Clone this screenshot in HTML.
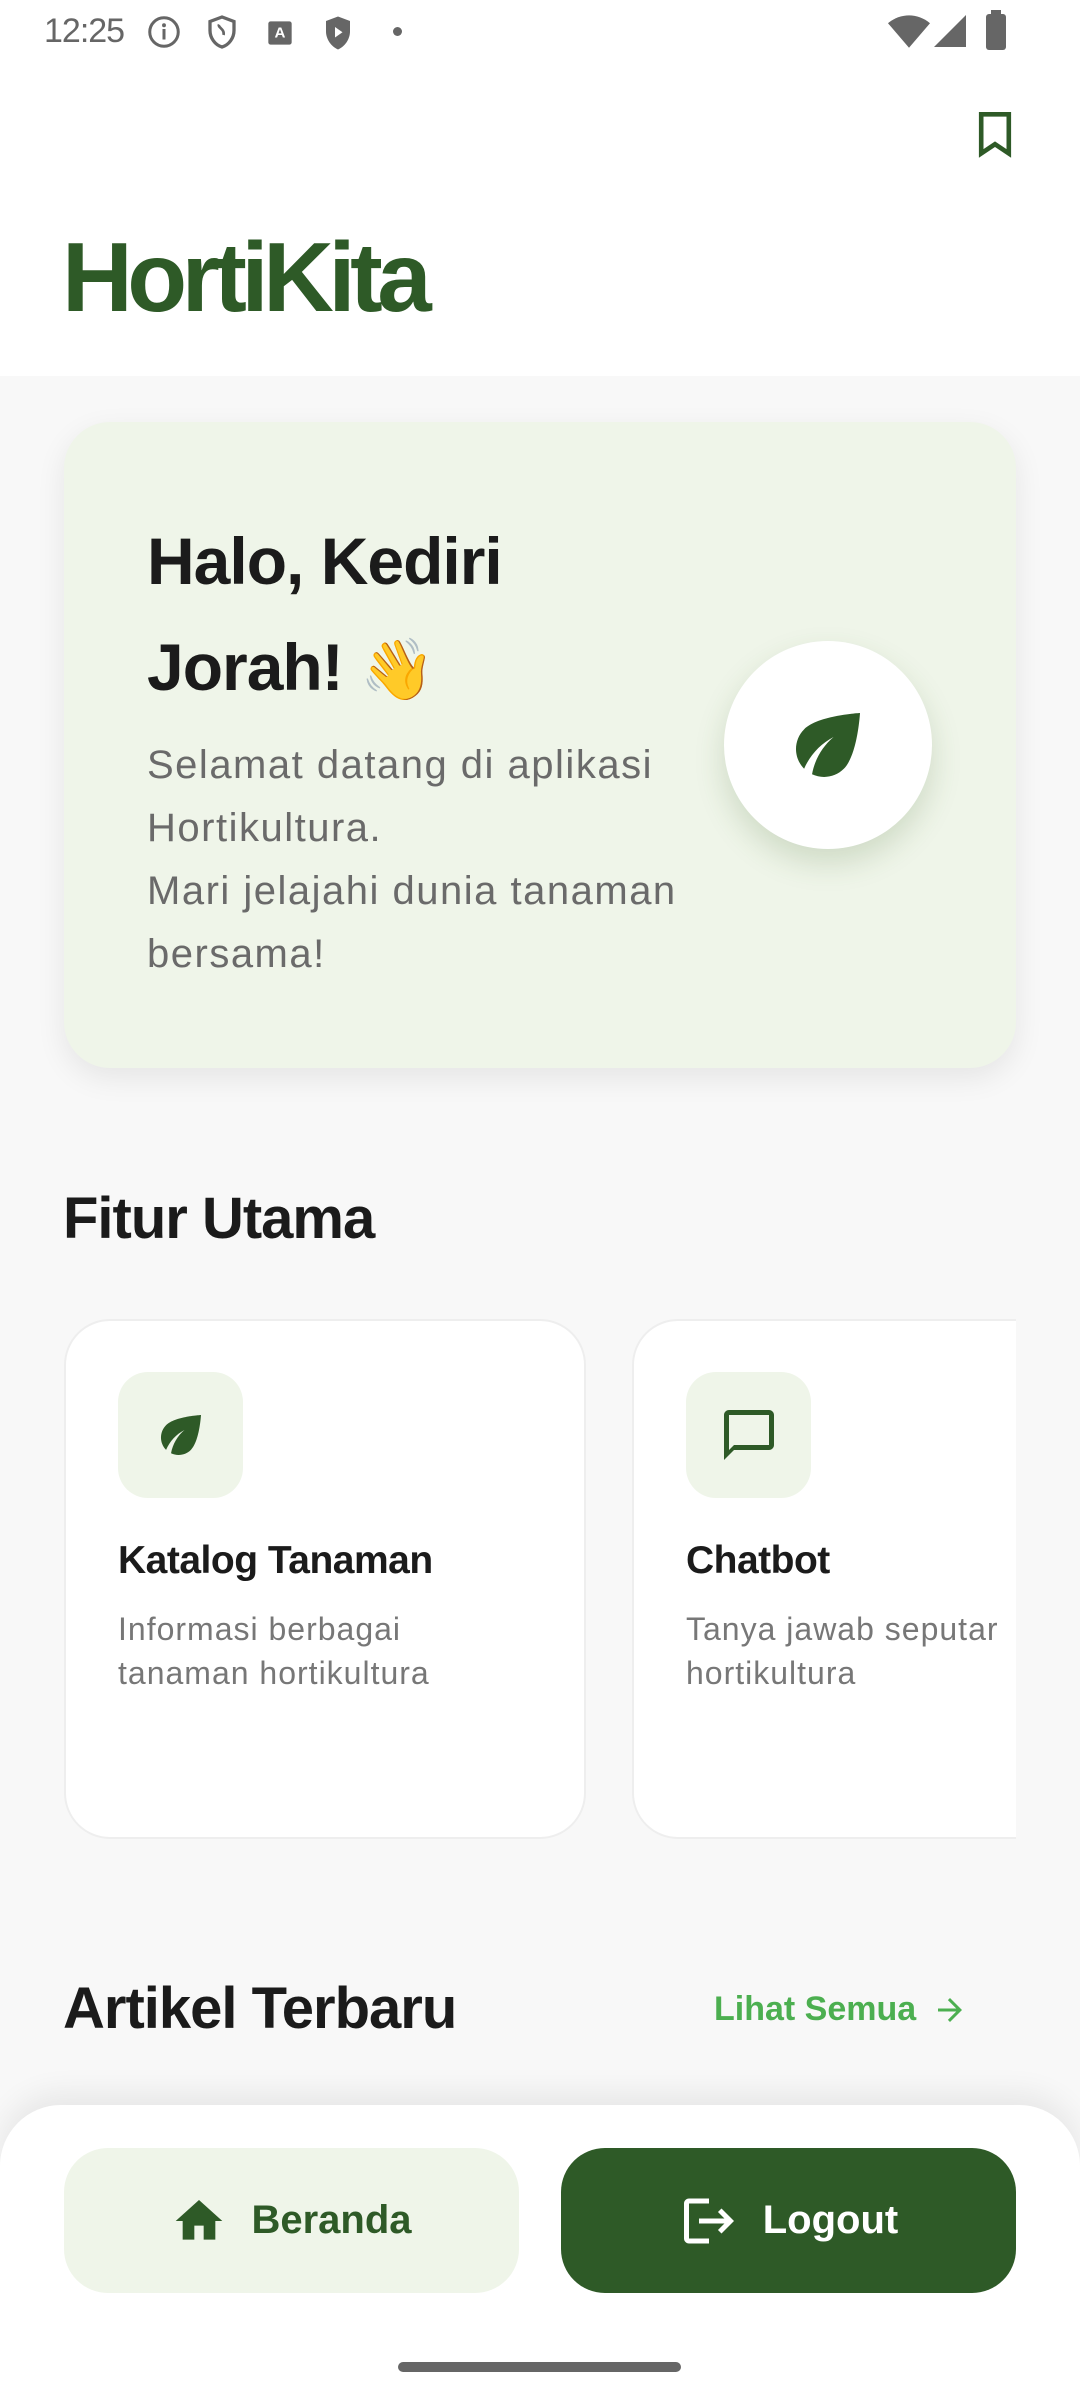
<!DOCTYPE html>
<html><head><meta charset="utf-8">
<style>
*{margin:0;padding:0;box-sizing:border-box}
body{width:1080px;height:2400px;overflow:hidden;background:#f8f8f8;font-family:"Liberation Sans","Noto Sans CJK JP",sans-serif;position:relative}
.abs{position:absolute}
.header{left:0;top:0;width:1080px;height:376px;background:#fff}
.status{left:0;top:0;width:1080px;height:70px;color:#666}
.hk{left:62px;top:228px;font-size:98px;font-weight:bold;color:#2e5a27;letter-spacing:-5.5px;line-height:1}
.card{left:64px;top:422px;width:952px;height:646px;border-radius:46px;background:#eff5e9;box-shadow:0 10px 30px rgba(0,0,0,0.08)}
.halo{left:147px;top:508px;font-size:66px;font-weight:bold;color:#1b1b1b;letter-spacing:-1px;line-height:106px}
.sub{left:147px;top:734px;font-size:40px;color:#6a6a6a;line-height:63px;letter-spacing:1.5px}
.circle{left:724px;top:641px;width:208px;height:208px;border-radius:50%;background:#fff;box-shadow:0 14px 30px rgba(60,100,40,0.18)}
.h2{font-size:58px;font-weight:bold;color:#1b1b1b;letter-spacing:-1px;line-height:1}
.fc{top:1319px;height:520px;background:#fff;border-radius:46px;border:2px solid #eee}
.ib{width:125px;height:126px;border-radius:30px;background:#eff5e9;display:flex;align-items:center;justify-content:center}
.ft{font-size:39px;font-weight:bold;color:#1b1b1b;letter-spacing:-0.5px}
.fd{font-size:32px;color:#777;line-height:44px;letter-spacing:1px}
.nav{left:0;top:2105px;width:1080px;height:295px;background:#fff;border-radius:61px 61px 0 0;box-shadow:0 -12px 30px rgba(0,0,0,0.07)}
.btn{top:2148px;width:455px;height:145px;border-radius:44px;display:flex;align-items:center;justify-content:center;font-size:40px;font-weight:bold}
</style></head><body>
<div class="abs header"></div>
<div class="abs status">
  <div class="abs" style="left:44px;top:12px;font-size:34px;color:#666;letter-spacing:-1px">12:25</div>
  <svg class="abs" style="left:146px;top:14px" width="36" height="36" viewBox="0 0 24 24"><circle cx="12" cy="12" r="9.5" fill="none" stroke="#666" stroke-width="2"/><rect x="11" y="10" width="2" height="7" fill="#666"/><circle cx="12" cy="7.5" r="1.3" fill="#666"/></svg>
  <svg class="abs" style="left:204px;top:14px" width="36" height="36" viewBox="0 0 24 24"><path d="M12 2L4 5v6c0 5 3.4 9.7 8 11 4.6-1.3 8-6 8-11V5z" fill="none" stroke="#666" stroke-width="2.2"/><path d="M10 7c-1 2 4 3 3 7" fill="none" stroke="#666" stroke-width="1.8"/></svg>
  <svg class="abs" style="left:266px;top:18px" width="28" height="30" viewBox="0 0 24 24"><rect x="2" y="2" width="20" height="20" rx="2" fill="#666"/><text x="12" y="16" font-size="13" font-weight="bold" text-anchor="middle" fill="#fff" font-family="Liberation Sans">A</text></svg>
  <svg class="abs" style="left:320px;top:14px" width="36" height="38" viewBox="0 0 24 24"><path d="M12 1L4 4v7c0 5 3.4 10 8 12 4.6-2 8-7 8-12V4z" fill="#666"/><path d="M10 8v7l5-3.5z" fill="#fff"/></svg>
  <div class="abs" style="left:393px;top:27px;width:9px;height:9px;border-radius:50%;background:#666"></div>
  <svg class="abs" style="left:888px;top:14px" width="42" height="36" viewBox="0 0 24 20"><path d="M12 19L0 5c7-6 17-6 24 0z" fill="#666"/></svg>
  <svg class="abs" style="left:934px;top:14px" width="32" height="34" viewBox="0 0 20 20"><path d="M20 0v20H0z" fill="#666"/></svg>
  <div class="abs" style="left:986px;top:14px;width:20px;height:36px;border-radius:3px;background:#666"></div>
  <div class="abs" style="left:991px;top:10px;width:10px;height:6px;background:#666"></div>
</div>
<svg class="abs" style="left:972px;top:112px" width="46" height="46" viewBox="4 2 16 20"><path d="M6 3h12v17l-6-4-6 4z" fill="none" stroke="#2e5a27" stroke-width="2" stroke-linejoin="miter"/></svg>
<div class="abs hk">HortiKita</div>

<div class="abs card"></div>
<div class="abs halo">Halo, Kediri<br>Jorah! <span style="font-family:'Noto Color Emoji','DejaVu Sans',sans-serif;font-size:60px;letter-spacing:0">👋</span></div>
<div class="abs sub">Selamat datang di aplikasi<br>Hortikultura.<br>Mari jelajahi dunia tanaman<br>bersama!</div>
<div class="abs circle" style="display:flex;align-items:center;justify-content:center">
  <svg width="96" height="96" viewBox="0 0 24 24"><path fill="#2e5a27" d="M6.05 8.05c-2.73 2.73-2.73 7.150-.02 9.88 1.47-3.4 4.09-6.24 7.37-7.930-2.78 2.34-4.73 5.61-5.39 9.32 2.6 1.23 5.8.78 7.95-1.37C19.43 14.47 20 4 20 4S9.53 4.57 6.05 8.05z"/></svg>
</div>

<div class="abs h2" style="left:63px;top:1190px">Fitur Utama</div>

<div class="abs" style="left:64px;top:1310px;width:952px;height:540px;overflow:hidden">
  <div class="abs fc" style="left:0;top:9px;width:522px">
    <div class="abs ib" style="left:52px;top:51px"><svg width="60" height="60" viewBox="0 0 24 24"><path fill="#2e5a27" d="M6.05 8.05c-2.73 2.73-2.73 7.15-.02 9.88 1.47-3.4 4.09-6.24 7.37-7.93-2.78 2.34-4.73 5.61-5.39 9.32 2.6 1.23 5.8.78 7.95-1.37C19.43 14.47 20 4 20 4S9.53 4.57 6.05 8.05z"/></svg></div>
    <div class="abs ft" style="left:52px;top:218px">Katalog Tanaman</div>
    <div class="abs fd" style="left:52px;top:286px">Informasi berbagai<br>tanaman hortikultura</div>
  </div>
  <div class="abs fc" style="left:568px;top:9px;width:522px">
    <div class="abs ib" style="left:52px;top:51px"><svg width="60" height="60" viewBox="0 0 24 24"><path fill="#2e5a27" d="M20 2H4c-1.1 0-2 .9-2 2v18l4-4h14c1.1 0 2-.9 2-2V4c0-1.1-.9-2-2-2zm0 14H6l-2 2V4h16v12z"/></svg></div>
    <div class="abs ft" style="left:52px;top:218px">Chatbot</div>
    <div class="abs fd" style="left:52px;top:286px">Tanya jawab seputar<br>hortikultura</div>
  </div>
</div>

<div class="abs h2" style="left:63px;top:1980px">Artikel Terbaru</div>
<div class="abs" style="left:714px;top:1990px;font-size:34px;font-weight:bold;color:#4caf50;display:flex;align-items:center;gap:16px">Lihat Semua <svg width="36" height="36" viewBox="0 0 24 24"><path fill="#4caf50" d="M12 4l-1.41 1.41L16.17 11H4v2h12.17l-5.58 5.59L12 20l8-8z"/></svg></div>

<div class="abs nav"></div>
<div class="abs btn" style="left:64px;background:#eff5e9;color:#2e5a27;gap:24px">
  <svg width="56" height="56" viewBox="0 0 24 24"><path fill="#2e5a27" d="M10 20v-6h4v6h5v-8h3L12 3 2 12h3v8z"/></svg>Beranda</div>
<div class="abs btn" style="left:561px;background:#2e5a27;color:#fff;gap:24px">
  <svg width="60" height="60" viewBox="0 0 24 24"><path fill="#fff" d="M17 7l-1.41 1.41L18.17 11H8v2h10.17l-2.58 2.58L17 17l5-5zM4 5h8V3H4c-1.1 0-2 .9-2 2v14c0 1.1.9 2 2 2h8v-2H4V5z"/></svg>Logout</div>
<div class="abs" style="left:398px;top:2362px;width:283px;height:10px;border-radius:5px;background:#666"></div>
</body></html>
